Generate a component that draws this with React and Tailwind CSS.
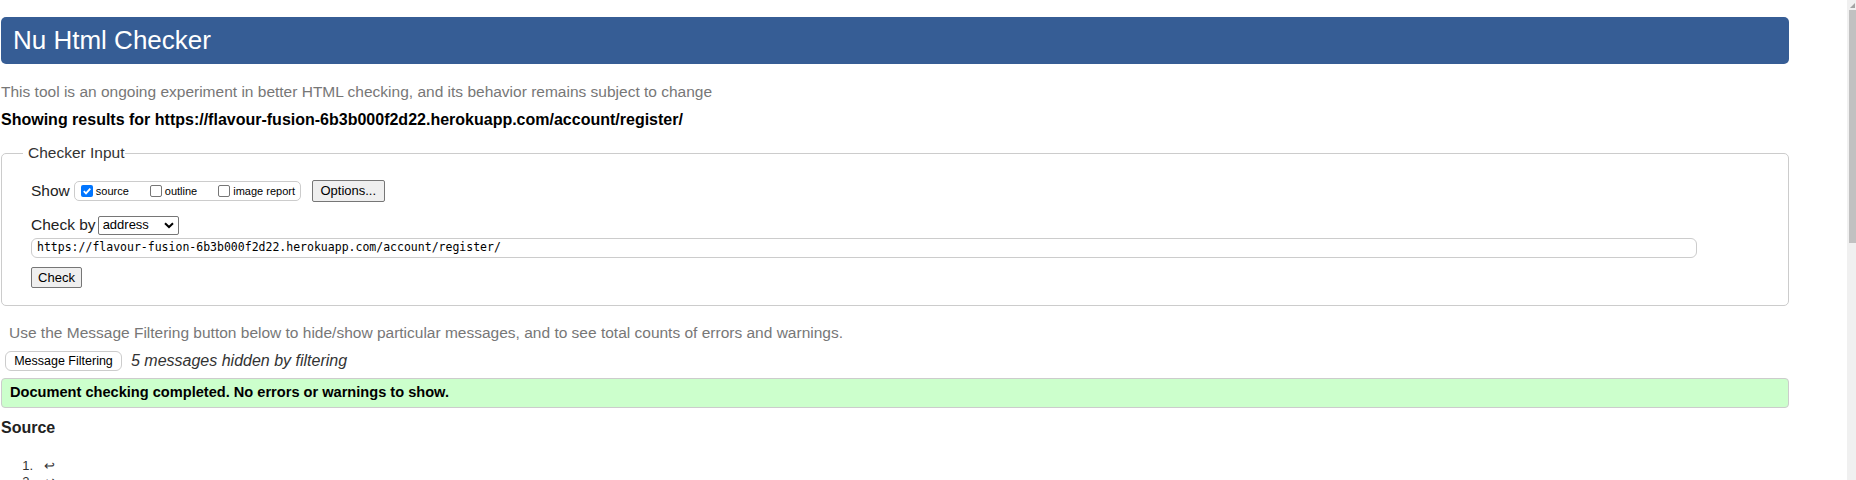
import React from "react";

function Check({ checked }) {
  if (checked) {
    return (
      <span className="inline-flex shrink-0 items-center justify-center w-[12px] h-[12px] rounded-[2px] bg-[#0075ff]">
        <svg width="10" height="10" viewBox="0 0 10 10">
          <path d="M1.8 5.2 L4 7.4 L8.3 2.6" fill="none" stroke="white" strokeWidth="1.8" />
        </svg>
      </span>
    );
  }
  return <span className="inline-block shrink-0 w-[12px] h-[12px] rounded-[2px] border border-[#767676] bg-white" />;
}

export default function App() {
  return (
    <div className="relative h-[480px] overflow-hidden bg-white font-['Liberation_Sans',Arial,sans-serif] text-black">
      <div className="pl-[1px] pt-[17px] w-[1789px]">
        <div className="h-[47px] rounded-[5px] bg-[#365d95] text-white text-[26px] pl-[12px] flex items-center">
          Nu Html Checker
        </div>
        <p className="mt-[18px] h-[20px] leading-[20px] text-[15.5px] text-[#777] whitespace-nowrap">
          This tool is an ongoing experiment in better HTML checking, and its behavior remains subject to change
        </p>
        <p className="mt-[8px] h-[20px] leading-[20px] text-[16px] font-bold whitespace-nowrap">
          Showing results for https://flavour-fusion-6b3b000f2d22.herokuapp.com/account/register/
        </p>
        <fieldset className="mt-[13px] border border-[#ccc] rounded-[5px] pl-[29px] pb-[17px] min-w-0">
          <legend className="-ml-[8px] pl-[5px] h-[20px] leading-[20px] text-[15.5px] text-[#333]">Checker Input</legend>
          <div className="mt-[17px] flex items-center h-[22px]">
            <span className="text-[15.5px] text-[#222] mr-[4px]">Show</span>
            <div className="flex items-center h-[20px] w-[227px] border border-[#ccc] rounded-[5px] pl-[6px] text-[11px] whitespace-nowrap">
              <Check checked />
              <span className="ml-[3px] mr-[21px]">source</span>
              <Check />
              <span className="ml-[3px] mr-[21px]">outline</span>
              <Check />
              <span className="ml-[3px]">image report</span>
            </div>
            <div className="ml-[11px] h-[22px] w-[73px] flex items-center justify-center bg-[#efefef] border border-[#767676] rounded-[2px] text-[13px]">
              Options...
            </div>
          </div>
          <div className="mt-[12px] flex items-center h-[22px]">
            <span className="text-[15.5px] text-[#222] mr-[2px]">Check by</span>
            <div className="h-[19px] w-[81px] flex items-center justify-between border border-[#767676] rounded-[2px] pl-[4px] pr-[4px] text-[13px]">
              <span>address</span>
              <svg width="10" height="7" viewBox="0 0 10 7">
                <path d="M1 1.2 L5 5 L9 1.2" fill="none" stroke="black" strokeWidth="2" />
              </svg>
            </div>
          </div>
          <div className="mt-[2px] h-[20px] w-[1666px] border border-[#ccc] rounded-[6px] flex items-center pl-[5px] font-['DejaVu_Sans_Mono',monospace] text-[11.5px] whitespace-nowrap">
            https://flavour-fusion-6b3b000f2d22.herokuapp.com/account/register/
          </div>
          <div className="mt-[9px] h-[21px] w-[51px] flex items-center justify-center bg-[#efefef] border border-[#767676] rounded-[2px] text-[13px]">
            Check
          </div>
        </fieldset>
        <p className="mt-[17px] pl-[8px] h-[20px] leading-[20px] text-[15.5px] text-[#777] whitespace-nowrap">
          Use the Message Filtering button below to hide/show particular messages, and to see total counts of errors and warnings.
        </p>
        <div className="mt-[8px] flex items-center h-[20px] pl-[4px]">
          <div className="h-[20px] w-[117px] flex items-center justify-center bg-white border border-[#ccc] rounded-[6px] text-[12.5px]">
            Message Filtering
          </div>
          <span className="ml-[9px] italic text-[16px] text-[#333] whitespace-nowrap">5 messages hidden by filtering</span>
        </div>
        <div className="mt-[7px] h-[30px] bg-[#ccffcc] border border-[#ccc] rounded-[4px] flex items-center pl-[8px] text-[14.6px] font-bold whitespace-nowrap">
          Document checking completed. No errors or warnings to show.
        </div>
        <h2 className="mt-[10px] h-[20px] leading-[20px] text-[16px] font-bold text-[#222]">Source</h2>
        <ol className="mt-[20px] text-[13px] leading-[16px] text-[#333]">
          <li className="flex"><span className="w-[32px] text-right">1.</span><span className="ml-[11px]">↩</span></li>
          <li className="flex"><span className="w-[32px] text-right">2.</span><span className="ml-[11px]">↩</span></li>
        </ol>
      </div>
      <div className="absolute right-0 top-0 h-[480px] w-[9px] bg-[#f0f0f0]">
        <div className="h-[10px] flex items-center justify-end pr-[1px]">
          <svg width="5" height="5" viewBox="0 0 5 5"><path d="M0 5 L5 0 L5 5 Z" fill="#a3a3a3" /></svg>
        </div>
        <div className="ml-[2px] h-[233px] bg-[#c1c1c1]" />
      </div>
    </div>
  );
}
